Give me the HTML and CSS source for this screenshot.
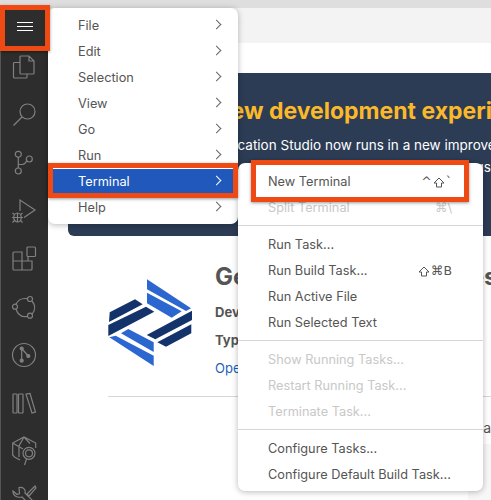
FILE: index.html
```html
<!DOCTYPE html>
<html lang="en">
  <head>
    <meta charset="UTF-8" />
    <meta name="viewport" content="width=device-width, initial-scale=1" />
    <title>Terminal menu</title>
    <link rel="stylesheet" href="styles.css">
  </head>
  <body>
    <div class="topstrip"></div>
    <div class="workbench">
      <aside class="activity">
        <div class="burger"><span></span><span></span><span></span></div>
        <!-- files -->
        <svg class="act" viewBox="0 0 26 26"><path d="M9 0h8l5 5v12a1 1 0 0 1-1 1H9a1 1 0 0 1-1-1V1a1 1 0 0 1 1-1zM17 0v5h5M8 6.500H2.500a1 1 0 0 0-1 1V21a1 1 0 0 0 1 1H14a1 1 0 0 0 1-1v-3"/></svg>
        <!-- search -->
        <svg class="act" viewBox="0 0 26 26"><circle cx="15.500" cy="7.500" r="7.500"/><path d="M10 13L1.500 21.500"/></svg>
        <!-- source control -->
        <svg class="act" viewBox="0 0 26 26"><circle cx="6.300" cy="2.300" r="3"/><circle cx="6.300" cy="19" r="3"/><circle cx="17.300" cy="7" r="3"/><path d="M6.300 5.300V16M6.300 12.500h4c3 0 3.500-2 4.500-4"/></svg>
        <!-- debug -->
        <svg class="act" viewBox="0 0 26 26"><path d="M8 11V0l15 10-11 7.500"/><ellipse cx="5.500" cy="17.500" rx="3.800" ry="4.500"/><path d="M0 17.500h11M.5 13l2.500 2M10.500 13L8 15M.5 22.500l2.500-2.500M10.500 22.500L8 20M5.500 13v9"/></svg>
        <!-- extensions -->
        <svg class="act" viewBox="0 0 26 26"><rect x="15" y="-1" width="8.500" height="9.500" rx="1"/><path d="M2 4h8v18H2a1 1 0 0 1-1-1V5a1 1 0 0 1 1-1zM1 13h19M10 22h9a1 1 0 0 0 1-1v-8h-4M16 13v-4.500"/></svg>
        <!-- cycle -->
        <svg class="act" viewBox="0 0 26 26"><circle cx="18" cy="3" r="2.500"/><circle cx="3" cy="10.700" r="2.500"/><circle cx="18" cy="19.700" r="2.500"/><path d="M4 8.300C6 4 10 1.800 15.500 2.700M20 5c3.300 4 3.300 9 .2 13M15.500 20.500C10 21.500 6 19 4 13.200"/></svg>
        <!-- branch in a circle -->
        <svg class="act" viewBox="0 0 26 26"><circle cx="12" cy="11" r="11.500"/><circle cx="9.700" cy="4.500" r="1.500" class="solid"/><circle cx="9.700" cy="16.700" r="1.500" class="solid"/><circle cx="16.300" cy="12" r="1.500" class="solid"/><path d="M9.700 4.500v12.200M9.700 4.500l6.600 7.500"/></svg>
        <!-- library -->
        <svg class="act" viewBox="0 0 26 26"><rect x="1" y="2" width="4" height="19" rx=".5"/><rect x="6.500" y="2" width="4.500" height="19" rx=".5"/><path d="M14 2.200l4-.7 5.500 18.500-3.500 1z"/></svg>
        <!-- cube with lens -->
        <svg class="act" viewBox="0 0 26 26"><path d="M8 20l-5.500-3-1.800-2V3L12-3l11.700 6v5M.7 3l10.300 6M12-3L7 6v11M12-3l6 6.500"/><circle cx="17" cy="13.300" r="6"/><circle cx="17" cy="13.300" r="3.500"/><path d="M14.500 19L12.500 25"/></svg>
        <!-- tools -->
        <svg class="act" viewBox="0 0 26 26"><path d="M1 3l4 3.500 2.500-1L7-.5c4-1 7 2 6 5.500l9 9-3.500 3.500L10 9C5 10 1 8 1 3zM23-2l-8 8 2 2 7-8zM11 13l-6 6 3 3"/></svg>
      </aside>

      <main class="editor">
        <div class="tabs"></div>
        <section class="banner">
          <h2 class="banner-title">New development experience</h2>
          <p class="banner-text">Business Application Studio now runs in a new improved base</p>
          <p class="banner-note">Your dev space and its settings</p>
        </section>
        <section class="project">
          <svg class="logo" viewBox="0 0 84 87">
            <path class="light" d="M39 .3L83 29.300 78 32 39 10.300zM39 13.700L73.700 32.300 63.700 38.700 39 24.300zM20.300 50L45.700 63.300V73L13 54.300zM7.700 56.700L45.700 76.700V87L1.300 58.300z" />
            <path class="dark" d="M84 31.700V41L47.300 60.300 38.700 56zM83.300 45.300V54.300L58 67.700 49.300 63.300zM27 20.300L34.700 25.300 1 43 1.700 33.300zM38 27.700L46.300 32.700 .3 57V46z" />
          </svg>
          <div class="project-info">
            <h1 class="project-title">Get Started with Spaces</h1>
            <div class="project-line">Dev Space</div>
            <div class="project-line">Type</div>
            <a class="project-link">Open Folder</a>
          </div>
        </section>
        <hr class="rule" />
        <p class="more">Start from a</p>
        <div class="panel"></div>
      </main>
    </div>

    <!-- menus lie over the editor -->
    <nav class="menu main-menu">
      <div class="item">File<i class="arrow"></i></div>
      <div class="item">Edit<i class="arrow"></i></div>
      <div class="item">Selection<i class="arrow"></i></div>
      <div class="item">View<i class="arrow"></i></div>
      <div class="item">Go<i class="arrow"></i></div>
      <div class="item">Run<i class="arrow"></i></div>
      <div class="item active">Terminal<i class="arrow"></i></div>
      <div class="item">Help<i class="arrow"></i></div>
    </nav>

    <nav class="menu sub-menu">
      <div class="item">New Terminal<span class="keys">^<svg class="shift" viewBox="0 0 12 11"><path d="M6 1L11 6H8.500V10H3.500V6H1z"/></svg>`</span></div>
      <div class="item off">Split Terminal<span class="keys">⌘\</span></div>
      <div class="sep"></div>
      <div class="item">Run Task...</div>
      <div class="item">Run Build Task...<span class="keys"><svg class="shift" viewBox="0 0 12 11"><path d="M6 1L11 6H8.500V10H3.500V6H1z"/></svg>⌘B</span></div>
      <div class="item">Run Active File</div>
      <div class="item">Run Selected Text</div>
      <div class="sep"></div>
      <div class="item off">Show Running Tasks...</div>
      <div class="item off">Restart Running Task...</div>
      <div class="item off">Terminate Task...</div>
      <div class="sep"></div>
      <div class="item">Configure Tasks...</div>
      <div class="item">Configure Default Build Task...</div>
    </nav>

    <div class="mark mark-burger"></div>
    <div class="mark mark-terminal"></div>
    <div class="mark mark-new"></div>
  </body>
</html>
```

FILE: styles.css
```css
html, body {
  margin: 0;
  height: 100%;
}
body {
  width: 491px;
  height: 500px;
  overflow: hidden;
  position: relative;
  background: #fff;
  font-family: Inter, 'Liberation Sans', sans-serif;
  color: #555;
}
.topstrip {
  height: 8px;
  background: #dedede;
}
.workbench {
  display: flex;
  height: 492px;
}

/* left bar */
.activity {
  width: 48px;
  flex: none;
  box-sizing: border-box;
  border-left: 1px solid #555;
  background: #2d2d2d;
  display: flex;
  flex-direction: column;
  align-items: center;
  overflow: hidden;
}
.burger {
  width: 100%;
  height: 36px;
  flex: none;
  display: flex;
  flex-direction: column;
  justify-content: center;
  align-items: center;
  gap: 3px;
  margin-bottom: 12px;
}
.burger span {
  width: 16px;
  height: 1px;
  background: #fff;
}
.act {
  width: 26px;
  height: 26px;
  flex: none;
  margin-bottom: 22px;
  margin-left: 1px;
  overflow: visible;
  fill: none;
  stroke: #808080;
  stroke-width: 1.200;
}
.act .solid {
  fill: #808080;
}

/* editor */
.editor {
  flex: 1;
  min-width: 0;
  overflow: hidden;
}
.tabs {
  height: 35px;
  background: #f3f3f3;
}
.banner {
  margin: 30px 0 0 20px;
  height: 163px;
  box-sizing: border-box;
  padding-top: 25px;
  background: #2c3c55;
  border-bottom-left-radius: 6px;
  white-space: nowrap;
  overflow: hidden;
}
.banner-title {
  margin: 0;
  padding-left: 145px;
  font-size: 23px;
  font-weight: 700;
  line-height: 26px;
  color: #fbb92a;
}
.banner-text {
  margin: 11px 0 0;
  padding-left: 76px;
  font-size: 13.500px;
  line-height: 20px;
  color: #fff;
}
.banner-note {
  margin: 2px 0 0;
  font-size: 13.500px;
  line-height: 20px;
  text-align: right;
  color: #fff;
}
.project {
  display: flex;
  margin: 43px 0 0 60px;
  gap: 23px;
  height: 117px;
}
.logo {
  width: 84px;
  height: 87px;
  flex: none;
}
.logo .light { fill: #2b67cf; }
.logo .dark { fill: #14336b; }
.project-info {
  white-space: nowrap;
  margin-top: -16px;
}
.project-title {
  margin: 0 0 7px;
  font-size: 24px;
  line-height: 28px;
  font-weight: 700;
}
.project-line {
  font-size: 13px;
  font-weight: 700;
  line-height: 28px;
}
.project-link {
  display: block;
  font-size: 13px;
  line-height: 28px;
  color: #1d5fbd;
}
.rule {
  margin: 0 0 0 60px;
  border: none;
  border-top: 1px solid #d8d8d8;
}
.more {
  margin: 21px 0 0;
  font-size: 14px;
  line-height: 20px;
  text-align: right;
  white-space: nowrap;
}
.panel {
  margin: 6px 0 0 420px;
  height: 56px;
  background: #f7f7f7;
}

/* menus */
.menu {
  position: absolute;
  box-sizing: border-box;
  background: #fff;
  border-radius: 7px;
  box-shadow: 0 1px 6px rgba(0, 0, 0, 0.28);
  font-size: 12.750px;
}
.main-menu {
  left: 48px;
  top: 8px;
  width: 190px;
  height: 216px;
  padding-top: 5px;
}
.sub-menu {
  left: 238px;
  top: 163px;
  width: 245px;
  height: 328px;
  padding-top: 6px;
}
.item {
  height: 26px;
  line-height: 26px;
  padding: 0 32px 0 30px;
  display: flex;
  justify-content: space-between;
  align-items: center;
  white-space: nowrap;
  position: relative;
}
.item.off {
  color: #c8c8c8;
}
.item.active {
  margin: 0 5px;
  padding: 0 32px 0 25px;
  background: #2158bb;
  color: #fff;
}
.keys {
  display: flex;
  align-items: center;
  gap: 1px;
  font-family: 'DejaVu Sans', sans-serif;
  font-size: 12.500px;
  margin-right: -1px;
}
.shift {
  width: 12px;
  height: 11px;
  fill: none;
  stroke: currentColor;
  stroke-width: 1;
}
.arrow {
  position: absolute;
  right: 18px;
  top: 8px;
  width: 6px;
  height: 6px;
  border-top: 1px solid #666;
  border-right: 1px solid #666;
  transform: rotate(45deg);
}
.active .arrow {
  right: 13px;
  border-color: #fff;
}
.sep {
  height: 1px;
  background: #d6d6d6;
  margin: 4px 0 6px;
}

/* red callouts */
.mark {
  position: absolute;
  box-sizing: border-box;
  border: 5px solid #f04a14;
  box-shadow: 0 1px 3px rgba(0, 0, 0, 0.4);
}
.mark-burger {
  left: 0;
  top: 5px;
  width: 50px;
  height: 46px;
}
.mark-terminal {
  left: 48px;
  top: 163px;
  width: 190px;
  height: 35px;
}
.mark-new {
  left: 251px;
  top: 160px;
  width: 218px;
  height: 42px;
}
```
